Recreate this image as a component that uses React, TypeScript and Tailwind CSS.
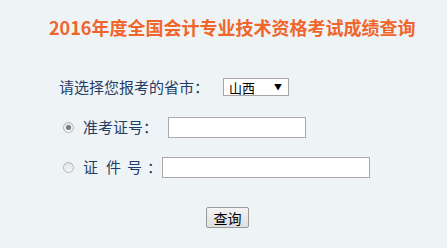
import React from "react";

/**
 * 成绩查询表单
 */
function Radio({ checked }: { checked?: boolean }) {
  return (
    <span className="flex h-[11px] w-[11px] items-center justify-center rounded-full border border-[#b4b4b4] bg-gradient-to-b from-[#e2e2e2] to-[#f7f7f7]">
      {checked && <span className="h-[5px] w-[5px] rounded-full bg-[#7a7a7a]" />}
    </span>
  );
}

export default function App() {
  return (
    <div
      className="h-[248px] w-[447px] overflow-hidden bg-[#eef3f6]"
      style={{ fontFamily: '"Noto Sans CJK SC", "Noto Sans", sans-serif' }}
    >
      <h1 className="pl-[49px] pt-[15px] text-[18px] font-bold leading-[24px] text-[#f0652a]">
        2016年度全国会计专业技术资格考试成绩查询
      </h1>

      <div className="mt-[39px] flex h-[18px] items-center pl-[59px] text-[15px] text-[#1f3d66]">
        <span className="w-[164px] whitespace-nowrap">请选择您报考的省市：</span>
        <div className="flex h-[18px] w-[66px] items-center justify-between border border-[#a6a6a6] bg-white pl-[5px] pr-[6px] text-[13px] leading-none text-black">
          <span>山西</span>
          <span className="text-[8px]">▼</span>
        </div>
      </div>

      <div className="mt-[21px] flex h-[21px] items-center pl-[63px] text-[15px] text-[#1f3d66]">
        <Radio checked />
        <span className="ml-[9px] w-[85px] whitespace-nowrap">准考证号：</span>
        <input
          type="text"
          className="h-[21px] w-[138px] border border-[#a9a9a9] bg-white outline-none"
        />
      </div>

      <div className="mt-[19px] flex h-[21px] items-center pl-[63px] text-[15px] text-[#1f3d66]">
        <Radio />
        <span className="ml-[9px] flex w-[79px] whitespace-nowrap">
          <span className="mr-[8px]">证</span>
          <span className="mr-[6px]">件</span>
          <span className="mr-[5px]">号</span>
          <span>：</span>
        </span>
        <input
          type="text"
          className="h-[21px] w-[208px] border border-[#a9a9a9] bg-white outline-none"
        />
      </div>

      <div className="mt-[29px] flex pl-[206px]">
        <button className="flex h-[21px] w-[43px] items-center justify-center rounded-[2px] border border-[#9a9a9a] bg-gradient-to-b from-[#f4f4f4] to-[#dedede] text-[14px] leading-none text-black">
          查询
        </button>
      </div>
    </div>
  );
}
